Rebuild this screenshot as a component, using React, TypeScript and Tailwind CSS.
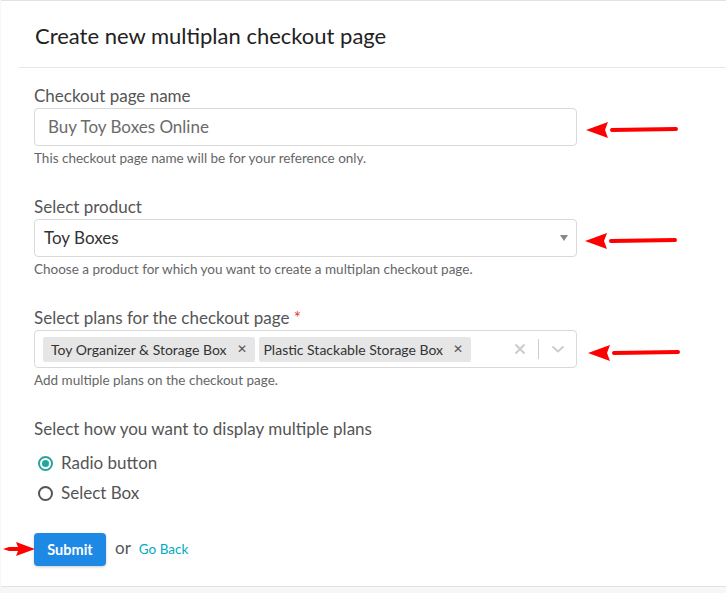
import React from "react";

function Arrow({ className }: { className: string }) {
  return (
    <svg className={className} width="96" height="20" viewBox="0 0 96 20">
      <path d="M92 9 L28 10" stroke="#f00" strokeWidth="4" strokeLinecap="round" fill="none" />
      <path d="M2 10 L24 2 L21 10 L24 18 Z" fill="#f00" />
    </svg>
  );
}

export default function App() {
  return (
    <div className="min-h-[593px] w-[726px] bg-[#f7f7f7] overflow-hidden" style={{ fontFamily: "Lato, 'Open Sans', sans-serif" }}>
      <div className="relative bg-white border-t border-b border-[#dfe3e6] ml-[1px] h-[587px]">
        <div className="h-[66px] flex items-center pl-[34px] pt-[3px] text-[22px] leading-[28px] text-[#222]">
          Create new multiplan checkout page
        </div>
        <div className="ml-[18px] border-t border-[#e3e6ea]"></div>

        <div className="pl-[33px] w-[576px]">
          <div className="pt-[18px] text-[17px] text-[#555] leading-[20px]">Checkout page name</div>
          <div className="mt-[2px] h-[38px] border border-[#d9d9d9] rounded-[4px] flex items-center pl-[13px] text-[17px] text-[#6b6b6b]">
            Buy Toy Boxes Online
          </div>
          <div className="mt-[4px] text-[13.5px] text-[#666] leading-[16px]">This checkout page name will be for your reference only.</div>

          <div className="mt-[31px] text-[17px] text-[#555] leading-[20px]">Select product</div>
          <div className="mt-[2px] h-[38px] border border-[#d9d9d9] rounded-[4px] flex items-center pl-[9px] pr-[8px] text-[17px] text-[#333]">
            <span className="flex-1">Toy Boxes</span>
            <svg width="8" height="6" viewBox="0 0 8 6"><path d="M0 0 L8 0 L4 6 Z" fill="#888" /></svg>
          </div>
          <div className="mt-[4px] text-[13.5px] text-[#666] leading-[16px]">Choose a product for which you want to create a multiplan checkout page.</div>

          <div className="mt-[31px] text-[17px] text-[#555] leading-[20px]">
            Select plans for the checkout page <span className="text-[#e53935]">*</span>
          </div>
          <div className="mt-[2px] h-[38px] border border-[#d9d9d9] rounded-[4px] flex items-center pl-[8px] pr-[11px] text-[14px] text-[#333]">
            <div className="flex-1 flex gap-[4px]">
              <span className="h-[25px] flex items-center bg-[#e6e6e6] rounded-[2px] pl-[8px] pr-[8px]">
                Toy Organizer &amp; Storage Box<span className="ml-[10px] text-[12px] text-[#555]">✕</span>
              </span>
              <span className="h-[25px] flex items-center bg-[#e6e6e6] rounded-[2px] pl-[5px] pr-[8px]">
                Plastic Stackable Storage Box<span className="ml-[10px] text-[12px] text-[#555]">✕</span>
              </span>
            </div>
            <svg width="12" height="12" viewBox="0 0 12 12"><path d="M1.5 1.5 L10.5 10.5 M10.5 1.5 L1.5 10.5" stroke="#ccc" strokeWidth="2" /></svg>
            <div className="ml-[12px] mr-[12px] w-px h-[20px] bg-[#ccc]"></div>
            <svg width="14" height="10" viewBox="0 0 14 10"><path d="M1.5 2.5 L7 7.5 L12.5 2.5" stroke="#ccc" strokeWidth="2" fill="none" /></svg>
          </div>
          <div className="mt-[4px] text-[13.5px] text-[#666] leading-[16px]">Add multiple plans on the checkout page.</div>

          <div className="mt-[31px] text-[17px] text-[#555] leading-[20px]">Select how you want to display multiple plans</div>
          <div className="mt-[14px] pl-[4px] flex items-center gap-[8px] text-[17px] text-[#555] h-[20px]">
            <span className="w-[15px] h-[15px] rounded-full border-2 border-[#26a69a] flex items-center justify-center">
              <span className="w-[7px] h-[7px] rounded-full bg-[#26a69a]"></span>
            </span>
            Radio button
          </div>
          <div className="mt-[10px] pl-[4px] flex items-center gap-[8px] text-[17px] text-[#555] h-[20px]">
            <span className="w-[15px] h-[15px] rounded-full border-2 border-[#555]"></span>
            Select Box
          </div>

          <div className="mt-[30px] flex items-center">
            <button className="h-[33px] w-[72px] bg-[#1e88e5] rounded-[4px] text-white text-[14.5px] font-bold shadow-[0_1px_3px_rgba(0,0,0,0.2)]">Submit</button>
            <span className="ml-[9px] text-[17px] text-[#555] leading-[20px] -mt-[3px]">or</span>
            <span className="ml-[8px] text-[13.5px] text-[#00acc1]">Go Back</span>
          </div>
        </div>

        <Arrow className="absolute left-[583px] top-[119px]" />
        <Arrow className="absolute left-[582px] top-[230px]" />
        <Arrow className="absolute left-[585px] top-[342px]" />
        <svg className="absolute left-[2px] top-[539px]" width="32" height="18" viewBox="0 0 32 18">
          <path d="M0 9 L6 7 L15 7 L13 2 L32 9 L13 16 L15 11 L6 11 Z" fill="#f00" />
        </svg>
      </div>
    </div>
  );
}
